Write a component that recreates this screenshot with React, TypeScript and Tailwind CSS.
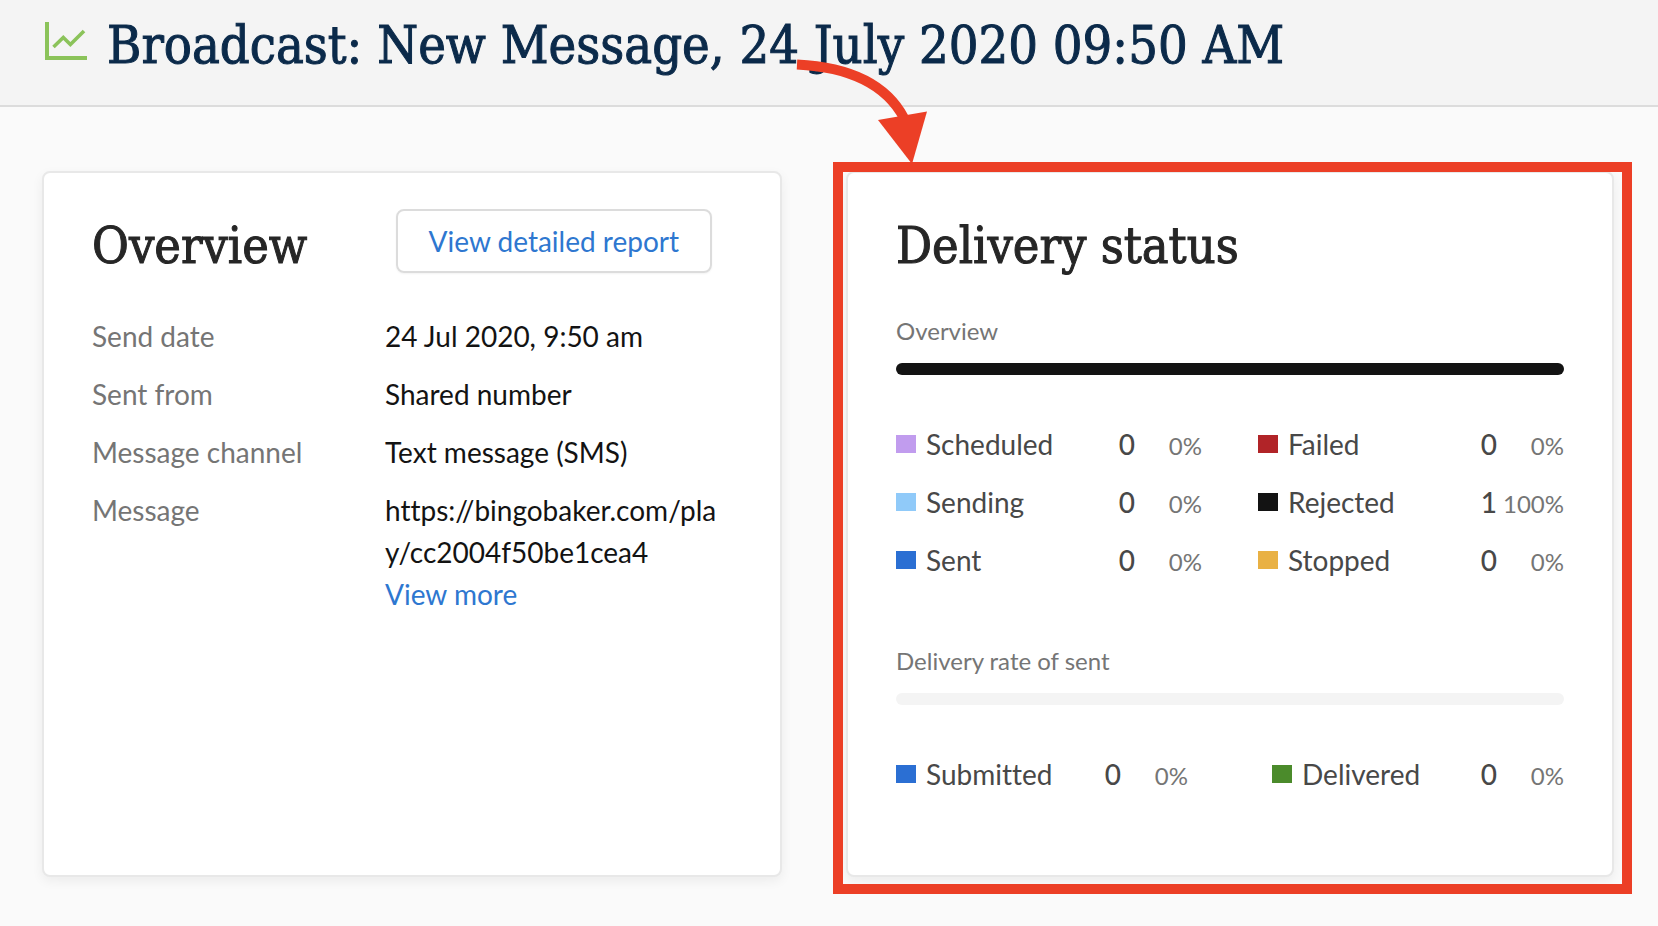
import type { ReactNode } from 'react'

type Stat = { label: string; count: number; percent: string; color: string }

const statuses: Stat[] = [
  { label: 'Scheduled', count: 0, percent: '0%', color: 'bg-[#c19cee]' },
  { label: 'Failed', count: 0, percent: '0%', color: 'bg-[#b12428]' },
  { label: 'Sending', count: 0, percent: '0%', color: 'bg-[#90caf9]' },
  { label: 'Rejected', count: 1, percent: '100%', color: 'bg-[#131313]' },
  { label: 'Sent', count: 0, percent: '0%', color: 'bg-[#2b6fd3]' },
  { label: 'Stopped', count: 0, percent: '0%', color: 'bg-[#e9b144]' },
]

const rates: Stat[] = [
  { label: 'Submitted', count: 0, percent: '0%', color: 'bg-[#2b6fd3]' },
  { label: 'Delivered', count: 0, percent: '0%', color: 'bg-[#4b8b2b]' },
]

const details: { label: string; value: ReactNode }[] = [
  { label: 'Send date', value: '24 Jul 2020, 9:50 am' },
  { label: 'Sent from', value: 'Shared number' },
  { label: 'Message channel', value: 'Text message (SMS)' },
  {
    label: 'Message',
    value: (
      <>
        <span className="block break-all">https://bingobaker.com/play/cc2004f50be1cea4</span>
        <a href="#more" className="text-[#2e77d0]">View more</a>
      </>
    ),
  },
]

function ChartIcon() {
  return (
    <svg className="w-[42px] h-[38px] shrink-0" viewBox="0 0 42 38" fill="none" stroke="#8bc35a" aria-hidden="true">
      <path d="M2 0V36H42" strokeWidth="4" />
      <path d="M8.5 25L18.3 15.5L25.4 22.5L39 9" strokeWidth="3.6" />
    </svg>
  )
}

function Card({ children }: { children: ReactNode }) {
  return (
    <section className="h-full bg-white border-2 border-[#e8e8e8] rounded-lg shadow-[0_4px_12px_rgba(0,0,0,0.06)] px-12 pt-9 pb-20">
      {children}
    </section>
  )
}

function CardTitle({ children }: { children: ReactNode }) {
  return (
    <h2 className="font-['Roboto_Slab','DejaVu_Serif_Condensed','DejaVu_Serif',serif] text-[50px] leading-[74px] whitespace-nowrap text-[#262626] [-webkit-text-stroke:1px]">
      {children}
    </h2>
  )
}

function StatItem({ label, count, percent, color }: Stat) {
  return (
    <li className="flex items-baseline h-[42px] leading-[42px]">
      <span className={`self-center w-5 h-[18px] mr-2.5 ${color}`} />
      <span className="flex-1 text-[#484848]">{label}</span>
      <span className="font-medium text-[#484848]">{count}</span>
      <span className="w-[67px] text-right text-2xl leading-8 text-[#757575]">{percent}</span>
    </li>
  )
}

export default function App() {
  return (
    <div className="min-h-screen bg-[#fafafa] font-[Lato,sans-serif] text-[28px] text-[#131313] [font-variant-ligatures:none]">
      <header className="flex items-start bg-[#f4f4f4] border-b-2 border-[#dcdcdc] pl-[45px] pr-11 pt-2.5 pb-[25px]">
        <div className="pt-3">
          <ChartIcon />
        </div>
        <h1 className="ml-5 font-['Roboto_Slab','DejaVu_Serif_Condensed','DejaVu_Serif',serif] text-[52px] leading-[70px] whitespace-nowrap text-[#0b2a4a] [-webkit-text-stroke:1px]">
          Broadcast: New Message, 24 July 2020 09:50 AM
        </h1>
      </header>

      <main className="grid grid-cols-[740fr_768fr] gap-16 pl-[42px] pr-11 pt-16 pb-12">
        <Card>
          <div className="flex items-start justify-between pr-5">
            <CardTitle>Overview</CardTitle>
            <button
              type="button"
              className="h-16 px-[31px] border-2 border-[#dcdcdc] rounded-lg shadow-xs whitespace-nowrap text-[#2e77d0]"
            >
              View detailed report
            </button>
          </div>
          <dl className="mt-8 space-y-4 leading-[42px]">
            {details.map(({ label, value }) => (
              <div key={label} className="flex pr-3">
                <dt className="w-[293px] shrink-0 text-[#757575]">{label}</dt>
                <dd className="min-w-0">{value}</dd>
              </div>
            ))}
          </dl>
        </Card>

        <div className="relative">
          <Card>
            <CardTitle>Delivery status</CardTitle>

            <h3 className="mt-8 text-2xl leading-8 text-[#757575]">Overview</h3>
            <div className="mt-4 h-3 rounded-full bg-[#131313]" />
            <ul className="mt-12 grid grid-cols-2 gap-x-14 gap-y-4">
              {statuses.map((s) => (
                <StatItem key={s.label} {...s} />
              ))}
            </ul>

            <h3 className="mt-16 text-2xl leading-8 text-[#757575]">Delivery rate of sent</h3>
            <div className="mt-4 h-3 rounded-full bg-[#f4f4f4]" />
            <ul className="mt-12 grid grid-cols-2 gap-x-[84px]">
              {rates.map((s) => (
                <StatItem key={s.label} {...s} />
              ))}
            </ul>
          </Card>

          {/* callout frame and arrow */}
          <div className="absolute -top-[9px] -left-[13px] -right-[18px] -bottom-[17px] border-10 border-[#ec3f26] pointer-events-none" />
          <svg
            className="absolute -top-[121px] -left-[56px] w-[140px] h-[114px] pointer-events-none"
            viewBox="790 50 140 114"
            fill="none"
            aria-hidden="true"
          >
            <path d="M797 64.5C848 67 886 84 904 118" stroke="#ec3f26" strokeWidth="10" />
            <path d="M878 120L927 111.500L912 164Z" fill="#ec3f26" />
          </svg>
        </div>
      </main>
    </div>
  )
}
